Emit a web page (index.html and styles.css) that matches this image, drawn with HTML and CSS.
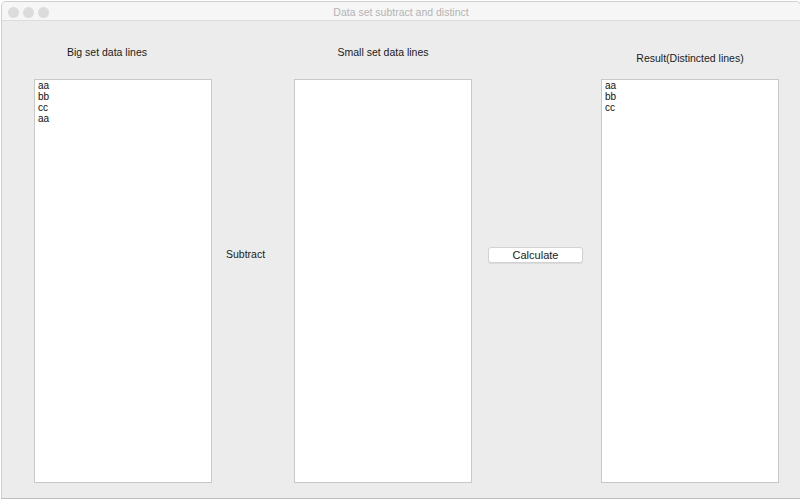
FILE: index.html
```html
<!DOCTYPE html>
<html lang="en">
<head>
    <meta charset="UTF-8">
    <meta name="viewport" content="width=device-width, initial-scale=1.0">
    <title>Data set subtract and distinct</title>
    <link rel="stylesheet" href="styles.css">
</head>
<body>
    <div class="window">
        <div class="titlebar">
            <div class="lights">
                <span class="light"></span>
                <span class="light"></span>
                <span class="light"></span>
            </div>
            <div class="title">Data set subtract and distinct</div>
        </div>

        <div class="content">
            <div class="panel">
                <div class="label label-big">Big set data lines</div>
                <textarea class="lines" id="bigSet">aa
bb
cc
aa</textarea>
            </div>

            <div class="action action-subtract">
                <span>Subtract</span>
            </div>

            <div class="panel">
                <div class="label">Small set data lines</div>
                <textarea class="lines" id="smallSet"></textarea>
            </div>

            <div class="action action-calc">
                <button id="calcButton">Calculate</button>
            </div>

            <div class="panel">
                <div class="label label-result">Result(Distincted lines)</div>
                <textarea class="lines" id="result">aa
bb
cc</textarea>
            </div>
        </div>
    </div>

    <script>
        document.getElementById("calcButton").addEventListener("click", function() {
            const big = document.getElementById("bigSet").value.split("\n");
            const small = document.getElementById("smallSet").value.split("\n");
            const seen = [];
            big.forEach(function(line) {
                if (small.indexOf(line) === -1 && seen.indexOf(line) === -1) {
                    seen.push(line);
                }
            });
            document.getElementById("result").value = seen.join("\n");
        });
    </script>
</body>
</html>
```

FILE: styles.css
```css
body {
    margin: 0;
    background-color: #ffffff;
    font-family: "Liberation Sans", Arial, sans-serif;
}

.window {
    width: 798px;
    height: 496px;
    margin-left: 1px;
    margin-top: 1px;
    border: 1px solid #cfcfcf;
    border-bottom-color: #bdbdbd;
    border-radius: 5px 5px 0 0;
    background-color: #ececec;
    overflow: hidden;
}

.titlebar {
    position: relative;
    height: 18px;
    background-color: #f6f6f6;
    border-bottom: 1px solid #dcdcdc;
}

.lights {
    display: flex;
    gap: 4px;
    padding: 5px 0 0 6px;
}

.light {
    width: 11px;
    height: 11px;
    border-radius: 50%;
    background-color: #dcdcdc;
}

.title {
    position: absolute;
    top: 0;
    left: 0;
    right: 0;
    line-height: 20px;
    text-align: center;
    font-size: 10.5px;
    color: #b4b4b4;
}

.content {
    display: flex;
    padding-left: 32px;
}

.panel {
    display: flex;
    flex-direction: column;
    width: 178px;
}

.label {
    margin-top: 24px;
    height: 14px;
    line-height: 14px;
    font-size: 10.5px;
    color: #1a1a1a;
    text-align: center;
}

.label-big {
    text-align: left;
    padding-left: 33px;
}

.label-result {
    margin-top: 30px;
}

.lines {
    margin: 20px 0 0 0;
    height: 404px;
    box-sizing: border-box;
    border: 1px solid #c8c8c8;
    background-color: #ffffff;
    padding: 0 3px;
    font-family: "Liberation Sans", Arial, sans-serif;
    font-size: 10px;
    line-height: 11px;
    color: #111111;
    resize: none;
    outline: none;
}

.label-result + .lines {
    margin-top: 14px;
}

.action {
    display: flex;
    align-items: flex-start;
    padding-top: 226px;
    font-size: 10.5px;
    color: #1a1a1a;
}

.action-subtract {
    width: 82px;
    padding-left: 14px;
    box-sizing: border-box;
    line-height: 14px;
}

.action-calc {
    width: 129px;
    padding-left: 16px;
    padding-top: 226px;
    box-sizing: border-box;
}

button {
    width: 95px;
    height: 16px;
    padding: 0;
    background-color: #ffffff;
    border: 1px solid #d2d2d2;
    border-radius: 3px;
    box-shadow: 0 1px 1px rgba(0, 0, 0, 0.08);
    font-family: "Liberation Sans", Arial, sans-serif;
    font-size: 11px;
    color: #1a1a1a;
    cursor: pointer;
}
```
